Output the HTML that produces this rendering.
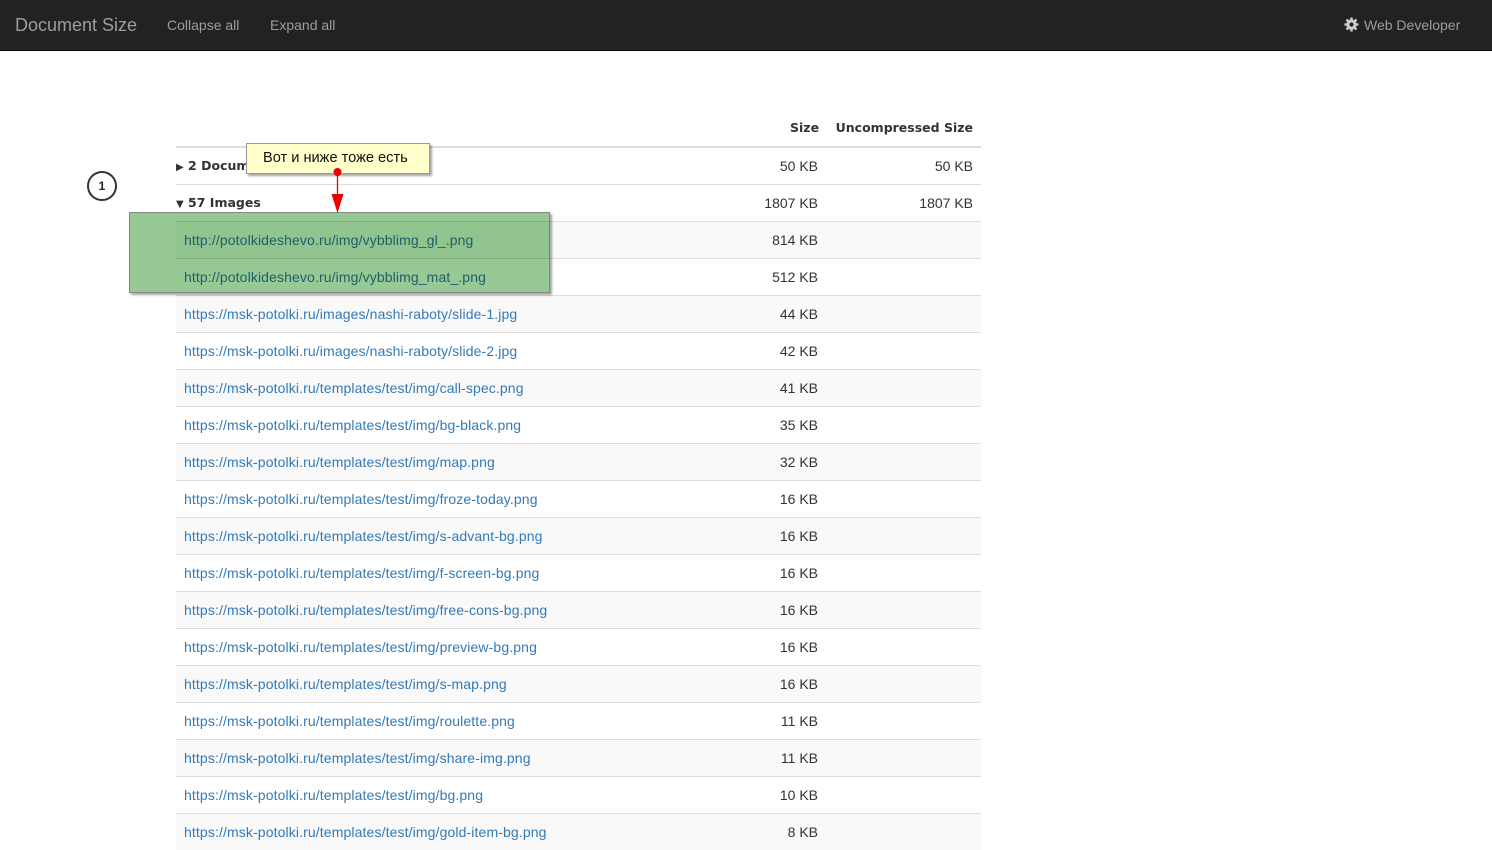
<!DOCTYPE html>
<html><head><meta charset="utf-8">
<style>
*{margin:0;padding:0;box-sizing:border-box}
body{width:1492px;height:839px;overflow:hidden;background:#fff;font-family:"Liberation Sans",sans-serif;font-size:14px;color:#333;position:relative}
.nav{position:absolute;left:0;top:0;width:1492px;height:51px;background:#222;border-bottom:1px solid #080808}
.nav span{position:absolute;top:0;line-height:50px;color:#9d9d9d}
.row{position:absolute;left:176px;width:805px;height:37px;border-top:1px solid #ddd;line-height:36px}
.row.s{background:#f9f9f9}
.row a{position:absolute;left:8px;color:#337ab7;text-decoration:none;letter-spacing:0.12px}
.row .sz{position:absolute;right:163px}
.row .uc{position:absolute;right:8px}
.b{font-family:"DejaVu Sans",sans-serif;font-weight:bold;font-size:12.5px;color:#333}
</style></head><body>
<div class="nav">
<span style="left:15px;font-size:18px">Document Size</span>
<span style="left:167px;font-size:14px">Collapse all</span>
<span style="left:270px;font-size:14px">Expand all</span>
<svg style="position:absolute;left:1344px;top:17px" width="15" height="15" viewBox="0 0 16 16"><g fill="#ccc"><circle cx="8" cy="8" r="5.5"/><g stroke="#ccc" stroke-width="2.6"><line x1="8" y1="0.5" x2="8" y2="15.5"/><line x1="0.5" y1="8" x2="15.5" y2="8"/><line x1="2.7" y1="2.7" x2="13.3" y2="13.3"/><line x1="13.3" y1="2.7" x2="2.7" y2="13.3"/></g></g><circle cx="8" cy="8" r="2.2" fill="#222"/></svg>
<span style="left:1364px;font-size:14px">Web Developer</span>
</div>

<div class="b" style="position:absolute;left:790px;top:120px">Size</div>
<div class="b" style="position:absolute;right:519px;top:120px">Uncompressed Size</div>
<div style="position:absolute;left:176px;top:146px;width:805px;height:2px;background:#ddd"></div>

<div class="row" style="top:147px;border-top:none;height:37px;line-height:38px"><span class="b" style="position:absolute;left:0"><span style="font-size:10px">&#9654;</span> 2 Documents</span><span class="sz">50 KB</span><span class="uc">50 KB</span></div>
<div class="row" style="top:184px"><span class="b" style="position:absolute;left:0"><span style="font-size:10px">&#9660;</span> 57 Images</span><span class="sz">1807 KB</span><span class="uc">1807 KB</span></div>

<div class="row s" style="top:221px"><a>http://potolkideshevo.ru/img/vybblimg_gl_.png</a><span class="sz">814 KB</span></div>
<div class="row" style="top:258px"><a>http://potolkideshevo.ru/img/vybblimg_mat_.png</a><span class="sz">512 KB</span></div>
<div class="row s" style="top:295px"><a>https://msk-potolki.ru/images/nashi-raboty/slide-1.jpg</a><span class="sz">44 KB</span></div>
<div class="row" style="top:332px"><a>https://msk-potolki.ru/images/nashi-raboty/slide-2.jpg</a><span class="sz">42 KB</span></div>
<div class="row s" style="top:369px"><a>https://msk-potolki.ru/templates/test/img/call-spec.png</a><span class="sz">41 KB</span></div>
<div class="row" style="top:406px"><a>https://msk-potolki.ru/templates/test/img/bg-black.png</a><span class="sz">35 KB</span></div>
<div class="row s" style="top:443px"><a>https://msk-potolki.ru/templates/test/img/map.png</a><span class="sz">32 KB</span></div>
<div class="row" style="top:480px"><a>https://msk-potolki.ru/templates/test/img/froze-today.png</a><span class="sz">16 KB</span></div>
<div class="row s" style="top:517px"><a>https://msk-potolki.ru/templates/test/img/s-advant-bg.png</a><span class="sz">16 KB</span></div>
<div class="row" style="top:554px"><a>https://msk-potolki.ru/templates/test/img/f-screen-bg.png</a><span class="sz">16 KB</span></div>
<div class="row s" style="top:591px"><a>https://msk-potolki.ru/templates/test/img/free-cons-bg.png</a><span class="sz">16 KB</span></div>
<div class="row" style="top:628px"><a>https://msk-potolki.ru/templates/test/img/preview-bg.png</a><span class="sz">16 KB</span></div>
<div class="row s" style="top:665px"><a>https://msk-potolki.ru/templates/test/img/s-map.png</a><span class="sz">16 KB</span></div>
<div class="row" style="top:702px"><a>https://msk-potolki.ru/templates/test/img/roulette.png</a><span class="sz">11 KB</span></div>
<div class="row s" style="top:739px"><a>https://msk-potolki.ru/templates/test/img/share-img.png</a><span class="sz">11 KB</span></div>
<div class="row" style="top:776px"><a>https://msk-potolki.ru/templates/test/img/bg.png</a><span class="sz">10 KB</span></div>
<div class="row s" style="top:813px"><a>https://msk-potolki.ru/templates/test/img/gold-item-bg.png</a><span class="sz">8 KB</span></div>

<div style="position:absolute;left:87px;top:171px;width:30px;height:30px;border:2px solid #333;border-radius:50%;text-align:center;line-height:26px;font-size:12px;font-weight:bold;color:#222">1</div>

<div style="position:absolute;left:129px;top:212px;width:421px;height:81px;background:#96c994;mix-blend-mode:multiply;border:1px solid #888;box-shadow:2px 2px 2px rgba(0,0,0,0.35)"></div>

<div style="position:absolute;left:246px;top:143px;width:184px;height:31px;background:#ffffcc;border:1px solid #999;box-shadow:2px 2px 2px rgba(0,0,0,0.35);line-height:28px;padding-left:16px;font-size:14.6px;color:#111">Вот и ниже тоже есть</div>

<svg style="position:absolute;left:325px;top:165px" width="25" height="50"><line x1="12.5" y1="7" x2="12.5" y2="30" stroke="#e00" stroke-width="1.3"/><circle cx="12.5" cy="7" r="4" fill="#e00"/><polygon points="6.5,29 18.5,29 12.5,48" fill="#e00"/></svg>
</body></html>
